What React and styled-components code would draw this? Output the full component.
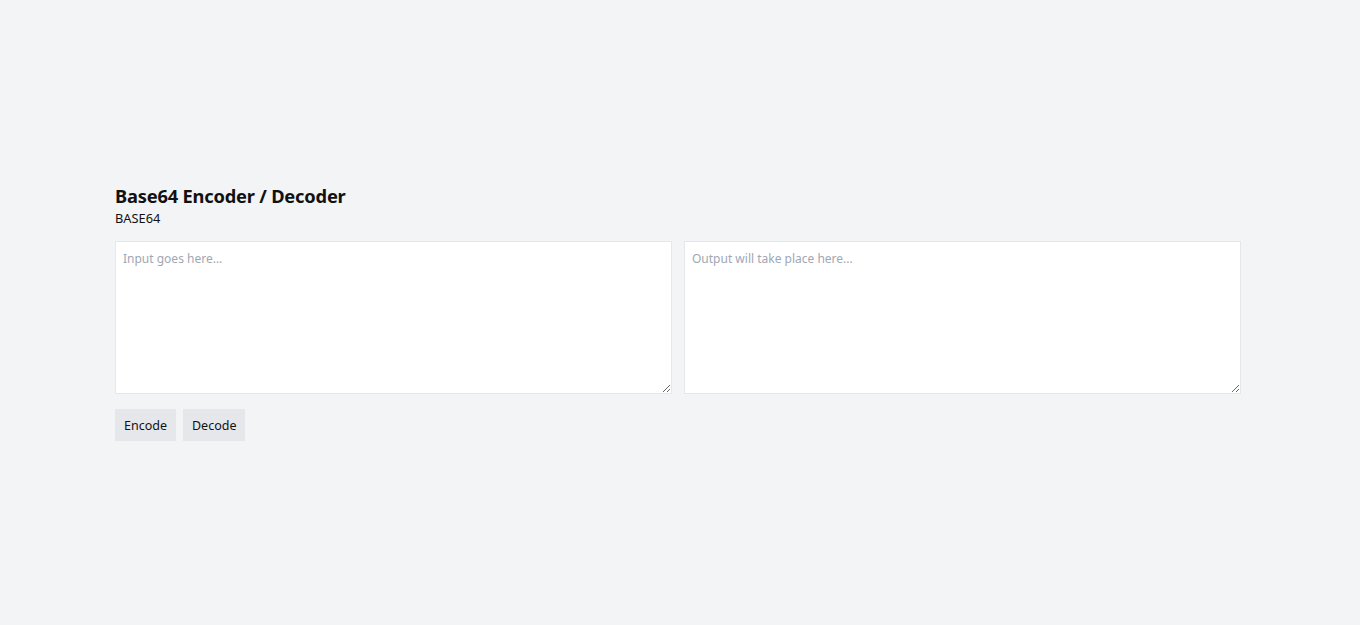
import React, { useState } from 'react'
import styled, { createGlobalStyle } from 'styled-components'

const GlobalStyle = createGlobalStyle`
  * { box-sizing: border-box; }
  body {
    margin: 0;
    background: #f3f4f6;
    font-family: 'Noto Sans', 'Open Sans', sans-serif;
    color: #111;
  }
`

const Page = styled.div`
  min-height: 100vh;
  display: flex;
  align-items: center;
  justify-content: center;
  padding: 1px 4px 0 0;
`

const Container = styled.div`
  width: 1126px;
`

const Title = styled.h1`
  margin: 0;
  font-size: 18.3px;
  line-height: 22px;
  font-weight: 700;
  letter-spacing: -0.2px;
`

const Subtitle = styled.div`
  font-size: 12.8px;
  line-height: 18px;
  margin-top: 2px;
`

const Panels = styled.div`
  display: grid;
  grid-template-columns: 1fr 1fr;
  gap: 12px;
  margin-top: 14px;
`

const Area = styled.textarea`
  height: 153px;
  width: 100%;
  resize: vertical;
  background: #fff;
  border: 1px solid #e5e7eb;
  border-radius: 0;
  padding: 8px 7px;
  font-family: inherit;
  font-size: 12px;
  line-height: 18px;
  color: #111;
  outline: none;
  display: block;

  &::placeholder {
    color: #a1a7b3;
  }
`

const Actions = styled.div`
  display: flex;
  gap: 7px;
  margin-top: 15px;
`

const Button = styled.button`
  height: 32px;
  padding: 0 9px;
  border: none;
  border-radius: 0;
  background: #e5e7eb;
  font-family: inherit;
  font-size: 12.5px;
  color: #111;
  cursor: pointer;
`

export default function App() {
  const [input, setInput] = useState('')
  const [output, setOutput] = useState('')

  const encode = () => {
    try {
      setOutput(btoa(unescape(encodeURIComponent(input))))
    } catch (e) {
      setOutput('Invalid input')
    }
  }

  const decode = () => {
    try {
      setOutput(decodeURIComponent(escape(atob(input))))
    } catch (e) {
      setOutput('Invalid Base64')
    }
  }

  return (
    <>
      <GlobalStyle />
      <Page>
        <Container>
          <Title>Base64 Encoder / Decoder</Title>
          <Subtitle>BASE64</Subtitle>
          <Panels>
            <Area
              placeholder="Input goes here..."
              value={input}
              onChange={e => setInput(e.target.value)}
            />
            <Area placeholder="Output will take place here..." value={output} readOnly />
          </Panels>
          <Actions>
            <Button onClick={encode}>Encode</Button>
            <Button onClick={decode}>Decode</Button>
          </Actions>
        </Container>
      </Page>
    </>
  )
}
